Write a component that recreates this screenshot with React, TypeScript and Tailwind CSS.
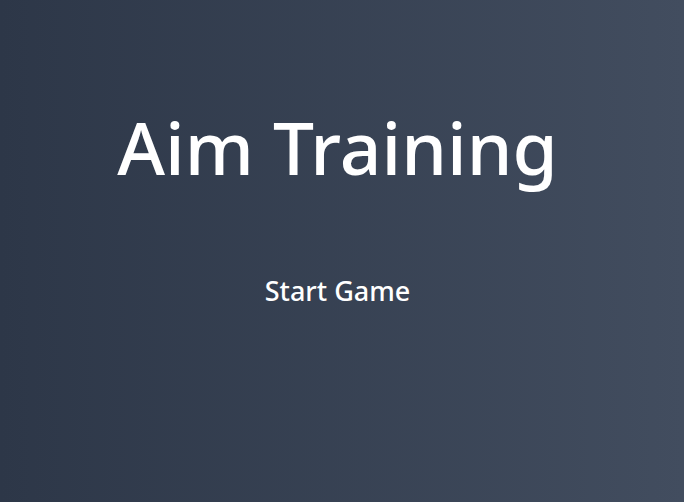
export default function App() {
  return (
    <div
      className="flex h-[502px] w-full flex-col items-center bg-gradient-to-r from-[#2d3748] to-[#424d5f] pr-[9px] text-white"
      style={{ fontFamily: '"Noto Sans", sans-serif' }}
    >
      <h1 className="mt-[97px] text-[73px] font-medium leading-[100px]">Aim Training</h1>
      <button className="mt-[70px] px-6 py-1 text-[27px] font-medium text-white">Start Game</button>
    </div>
  );
}
